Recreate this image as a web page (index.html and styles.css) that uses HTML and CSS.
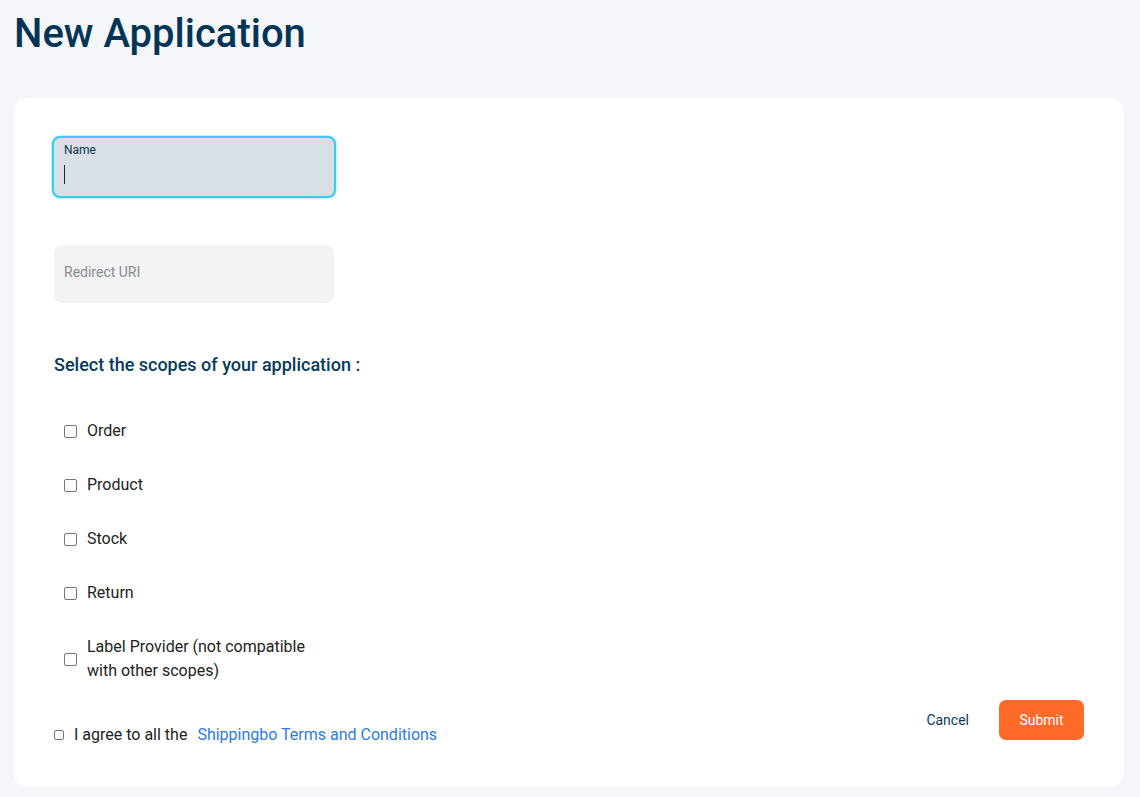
FILE: index.html
```html
<!DOCTYPE html>
<html>
<head>
<meta charset="utf-8">
<link rel="stylesheet" href="styles.css">
</head>
<body>
<h1 class="title">New Application</h1>
<div class="card">
  <div class="field field-focus">
    <span class="field-label">Name</span>
    <span class="caret"></span>
  </div>
  <div class="field field-empty">
    <span class="placeholder">Redirect URI</span>
  </div>
  <h2 class="scopes-title">Select the scopes of your application :</h2>
  <div class="scopes">
    <label class="scope"><span class="box"></span><span class="scope-text">Order</span></label>
    <label class="scope"><span class="box"></span><span class="scope-text">Product</span></label>
    <label class="scope"><span class="box"></span><span class="scope-text">Stock</span></label>
    <label class="scope"><span class="box"></span><span class="scope-text">Return</span></label>
    <label class="scope scope-wide"><span class="box"></span><span class="scope-text">Label Provider (not compatible with other scopes)</span></label>
  </div>
  <div class="footer">
    <div class="agree">
      <span class="box box-small"></span>
      <span class="agree-text">I agree to all the</span>
      <a class="link">Shippingbo Terms and Conditions</a>
    </div>
    <div class="actions">
      <button class="btn-cancel">Cancel</button>
      <button class="btn-submit">Submit</button>
    </div>
  </div>
</div>
</body>
</html>
```
FILE: styles.css
```css
* { box-sizing: border-box; }
html, body { margin: 0; }
body {
  background: #f5f6fa;
  font-family: Roboto, "Liberation Sans", sans-serif;
  padding: 10px 16px 0 14px;
  height: 797px;
  overflow: hidden;
}
.title {
  margin: 0 0 40px;
  font-size: 40px;
  line-height: 48px;
  font-weight: 500;
  color: #023457;
}
.card {
  background: #fff;
  border-radius: 14px;
  padding: 38px 40px 36px 38px;
  height: 689px;
  display: flex;
  flex-direction: column;
}
.field {
  width: 284px;
  height: 62px;
  border-radius: 8px;
  position: relative;
}
.field-focus {
  background: #d8e0e6;
  border: 2px solid #3ccaf6;
  box-shadow: 0 0 1px 1px rgba(60, 202, 246, 0.35);
  padding: 5px 0 0 10px;
  display: flex;
  flex-direction: column;
}
.field-label {
  font-size: 12px;
  line-height: 14px;
  color: #0c3452;
}
.caret {
  width: 1px;
  height: 19px;
  background: #222;
  margin-top: 8px;
}
.field-empty {
  margin: 47px 0 0 2px;
  width: 280px;
  height: 58px;
  background: #f2f3f5;
  padding: 0 10px 4px;
  display: flex;
  align-items: center;
}
.placeholder {
  font-size: 14px;
  color: #888b8f;
}
.scopes-title {
  margin: 50px 0 0 2px;
  font-size: 18px;
  line-height: 24px;
  font-weight: 500;
  color: #073a5c;
}
.scopes {
  margin: 42px 0 0 12px;
  display: flex;
  flex-direction: column;
  gap: 30px;
}
.scope {
  display: flex;
  align-items: center;
  gap: 10px;
  font-size: 16px;
  line-height: 24px;
  color: #222;
}
.scope-wide .scope-text { width: 230px; }
.box {
  width: 13px;
  height: 13px;
  border: 1px solid #767676;
  border-radius: 2px;
  background: #fff;
  flex: none;
}
.box-small {
  width: 10px;
  height: 10px;
}
.footer {
  margin-top: 17px;
  display: flex;
  justify-content: space-between;
  align-items: flex-start;
}
.agree {
  margin: 23px 0 0 2px;
  display: flex;
  align-items: center;
  font-size: 16px;
  line-height: 24px;
}
.agree-text {
  color: #222;
  margin-left: 10px;
}
.link {
  color: #2c7be5;
  margin-left: 10px;
}
.actions {
  display: flex;
  align-items: center;
  gap: 30px;
}
.btn-cancel {
  background: none;
  border: 0;
  padding: 0;
  font-family: inherit;
  font-size: 14px;
  color: #0c3a5c;
}
.btn-submit {
  width: 85px;
  height: 40px;
  border: 0;
  border-radius: 7px;
  background: #ff6a28;
  color: #fff;
  font-family: inherit;
  font-size: 14px;
}
```
